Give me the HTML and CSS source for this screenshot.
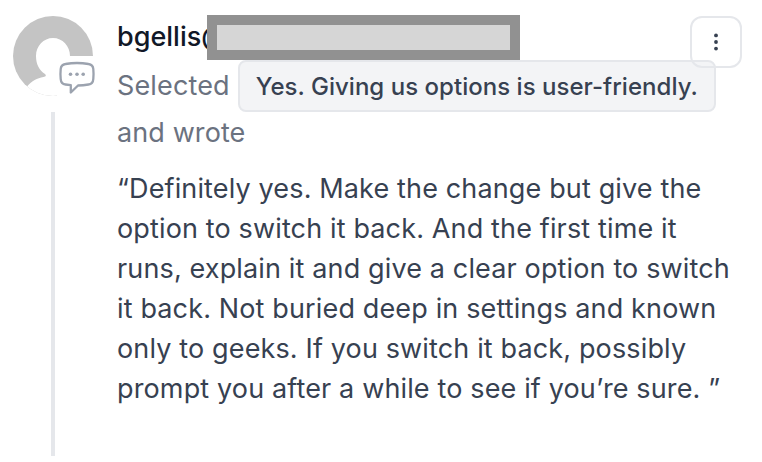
FILE: index.html
```
<!DOCTYPE html>
<html lang="en">
<head>
  <meta charset="UTF-8" />
  <meta name="viewport" content="width=device-width, initial-scale=1.0"/>
  <title>Feedback</title>
  <link rel="stylesheet" href="styles.css">
</head>
<body>
  <article class="entry">
    <div class="rail">
      <div class="avatar">
        <svg width="80" height="80" viewBox="0 0 80 80">
          <defs>
            <clipPath id="round"><circle cx="40" cy="40" r="40"/></clipPath>
          </defs>
          <g clip-path="url(#round)">
            <rect width="80" height="80" fill="#c4c4c4"/>
            <path d="M40 22c9.500 0 17 8 17 18 0 9-3 15-6.500 19.500C52 61 80 62 80 80H10L14 70.500C19 65 24 62 30.500 61 33 60.500 33.500 59.500 32 58 26 54 23 48 23 40c0-10 7.500-18 17-18z" fill="#fff"/>
          </g>
        </svg>
        <span class="badge">
          <svg width="40" height="40" viewBox="0 0 40 40" fill="none" stroke="#9ca3af" stroke-width="2.300" stroke-linejoin="round">
            <path d="M8.500 8Q20 6 31.500 8Q36 8.600 36.300 13Q36.800 18 36.300 23Q36 28 31.500 28.500Q26 29.300 21 29.500L13.800 36.500V29.200L8.500 28.500Q4 28 3.700 23Q3.200 18 3.700 13Q4 8.600 8.500 8z"/>
            <g fill="#9ca3af" stroke="none">
              <circle cx="13.500" cy="18.300" r="1.800"/>
              <circle cx="20" cy="18.300" r="1.800"/>
              <circle cx="26.200" cy="18.300" r="1.800"/>
            </g>
          </svg>
        </span>
      </div>
      <div class="line"></div>
    </div>
    <div class="content">
      <div class="name">bgellis@<span class="redacted"></span></div>
      <div class="meta">
        <div class="selected">Selected <span class="choice">Yes. Giving us options is user-friendly.</span></div>
        <div class="wrote">and wrote</div>
      </div>
      <p class="quote">“Definitely yes. Make the change but give the<br>option to switch it back. And the first time it<br>runs, explain it and give a clear option to switch<br>it back. Not buried deep in settings and known<br>only to geeks. If you switch it back, possibly<br>prompt you after a while to see if you’re sure. ”</p>
    </div>
    <button class="menu" type="button" aria-label="More">
      <svg width="6" height="18" viewBox="0 0 6 18" fill="#374151">
        <circle cx="3" cy="2.400" r="1.900"/>
        <circle cx="3" cy="9" r="1.900"/>
        <circle cx="3" cy="15.600" r="1.900"/>
      </svg>
    </button>
  </article>
</body>
</html>
```
FILE: styles.css
```
body {
  margin: 0;
  background: #fff;
  font-family: Inter, sans-serif;
  font-size: 27px;
  color: #374151;
}

.entry {
  position: relative;
  display: flex;
  gap: 24px;
  box-sizing: border-box;
  height: 456px;
  padding: 16px 20px 0 13px;
}

.rail {
  display: flex;
  flex-direction: column;
  align-items: center;
  gap: 16px;
  width: 80px;
}

.avatar {
  position: relative;
  height: 80px;
}

.avatar svg {
  display: block;
}

.badge {
  position: absolute;
  left: 44px;
  top: 40px;
  background: #fff;
}

.line {
  flex: 1;
  width: 4px;
  background: #e5e7eb;
}

.content {
  flex: 1;
  white-space: nowrap;
}

.name {
  position: relative;
  height: 44px;
  line-height: 42px;
  font-weight: 500;
  color: #111827;
}

.redacted {
  position: absolute;
  left: 90px;
  top: -1px;
  box-sizing: border-box;
  width: 313px;
  height: 45px;
  border: 10px solid #919191;
  background: #d6d6d6;
}

.meta {
  color: #6b7280;
}

.selected {
  display: flex;
  gap: 8px;
  height: 52px;
  line-height: 51px;
  letter-spacing: 0.14px;
}

.choice {
  box-sizing: border-box;
  width: 478px;
  height: 52px;
  padding: 0 16px;
  border: 2px solid #e5e7eb;
  border-radius: 8px;
  background: #f3f4f6;
  color: #374151;
  font-size: 24px;
  font-weight: 500;
  line-height: 49px;
  letter-spacing: 0.03px;
}

.wrote {
  line-height: 42px;
  letter-spacing: 0.1px;
}

.quote {
  margin: 15px 0 0;
  line-height: 40px;
  letter-spacing: 0.14px;
}

.menu {
  position: absolute;
  top: 16px;
  right: 20px;
  display: flex;
  align-items: center;
  justify-content: center;
  width: 52px;
  height: 52px;
  padding: 0;
  border: 2px solid #e5e7eb;
  border-radius: 12px;
  background: transparent;
}
```
